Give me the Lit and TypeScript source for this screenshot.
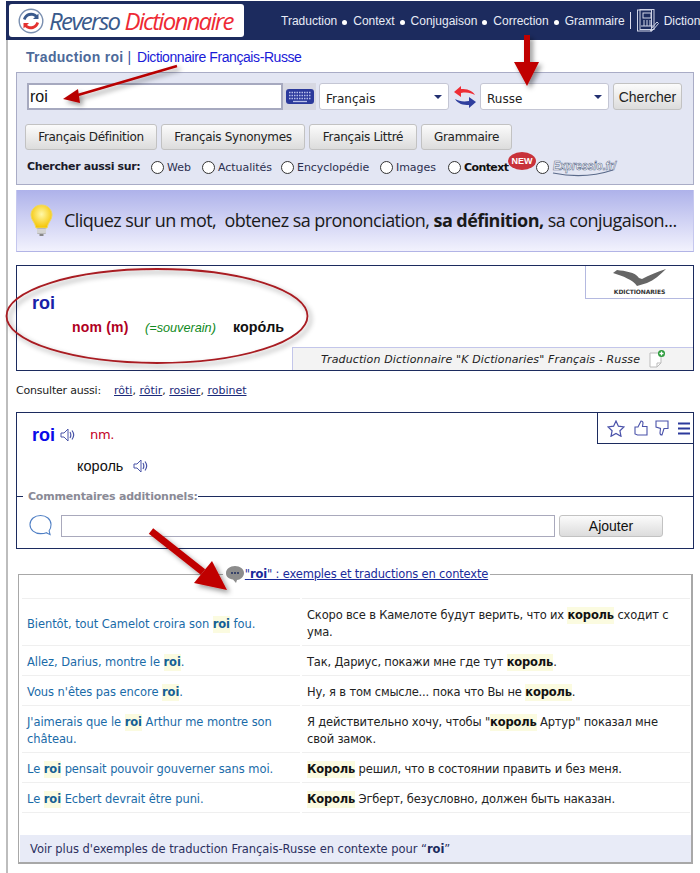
import { LitElement, html, css, svg } from "lit";
import { customElement } from "lit/decorators.js";

const speaker = html`<svg class="spk" width="15" height="14" viewBox="0 0 15 14"><path d="M1 5h3l4-4v12l-4-4H1z" fill="#fff" stroke="#4a55a8" stroke-width="1"/><path d="M10 4c1 1.800 1 4.200 0 6M12 2.500c2 2.700 2 6.300 0 9" fill="none" stroke="#4a55a8" stroke-width="1.200"/></svg>`;

const rows: [unknown, unknown][] = [
  [html`Bientôt, tout Camelot croira son <b>roi</b> fou.`, html`Скоро все в Камелоте будут верить, что их <b>король</b> сходит с ума.`],
  [html`Allez, Darius, montre le <b>roi</b>.`, html`Так, Дариус, покажи мне где тут <b>король</b>.`],
  [html`Vous n'êtes pas encore <b>roi</b>.`, html`Ну, я в том смысле... пока что Вы не <b>король</b>.`],
  [html`J'aimerais que le <b>roi</b> Arthur me montre son château.`, html`Я действительно хочу, чтобы "<b>король</b> Артур" показал мне свой замок.`],
  [html`Le <b>roi</b> pensait pouvoir gouverner sans moi.`, html`<b>Король</b> решил, что в состоянии править и без меня.`],
  [html`Le <b>roi</b> Ecbert devrait être puni.`, html`<b>Король</b> Эгберт, безусловно, должен быть наказан.`],
];

@customElement("app-root")
export class AppRoot extends LitElement {
  static styles = css`
    :host { display: block; position: relative; width: 700px; height: 873px; overflow: hidden; background: #fff; font-family: "DejaVu Sans", sans-serif; font-size: 11px; color: #222; }
    * { box-sizing: border-box; }
    a { color: inherit; }
    .top { margin: 1px 0 0 6px; height: 39px; background: #1c2b5e; display: flex; align-items: center; overflow: hidden; white-space: nowrap; }
    .logo { margin-left: 3px; width: 235px; height: 33px; background: #fff; border-radius: 3px; display: flex; align-items: center; flex: none; }
    .logo svg { margin-left: 9px; flex: none; }
    .rev, .dic { font-family: "Open Sans", sans-serif; font-style: italic; font-size: 24px; }
    .rev { color: #3a5a8c; margin-left: 5px; letter-spacing: -1.65px; }
    .dic { color: #ee2a35; margin-left: 5px; letter-spacing: -1.75px; }
    .nav { margin-left: 37px; display: flex; align-items: center; color: #e8ecf6; font-family: "Liberation Sans", sans-serif; font-size: 12px; flex: none; }
    .nav .dot { width: 5px; height: 5px; border-radius: 50%; background: #fff; margin: 4px 6px 0 5px; }
    .nav .sep { width: 1px; height: 17px; background: #dde; margin: 0 6px 0 5px; }
    .nav svg { margin-right: 5px; }
    .main { margin-left: 6px; border-left: 2px solid #bdbdbd; padding-left: 8px; height: 833px; width: 688px; }
    .title { height: 32px; padding: 8px 0 0 10px; font-family: "Liberation Sans", sans-serif; font-size: 14px; line-height: 18px; color: #3c4fa0; }
    .title b { color: #4d6a9a; letter-spacing: 0.3px; }
    .title span { color: #1a1ad8; letter-spacing: -0.42px; margin-left: 2px; }
    .search { width: 678px; height: 113px; background: #e3e6f3; border: 1px solid #a9acc6; padding: 10px 0 0 10px; }
    .r1 { display: flex; align-items: flex-start; }
    .inp { width: 256px; height: 27px; border: 2px solid #a6a9bf; background: #fff; font: 16px "Liberation Sans", sans-serif; padding: 0 1px; color: #111; outline: none; }
    .kb { width: 33px; height: 27px; background: #d7d8e2; display: flex; align-items: center; justify-content: center; }
    .sel { height: 27px; background: #fff; border: 1px solid #c4c6d4; border-radius: 3px; display: flex; align-items: center; justify-content: space-between; padding: 4px 6px 0 6px; color: #222; font-size: 12px; }
    .sel i { width: 0; height: 0; border: 4px solid transparent; border-top: 4px solid #223070; border-bottom: 0; margin-top: -4px; }
    .s1 { width: 130px; margin-left: 3px; }
    .s2 { width: 129px; }
    .swap { width: 31px; display: flex; justify-content: center; padding-top: 2px; }
    .btn { border: 1px solid #c2c2c2; border-radius: 3px; background: linear-gradient(#fbfbfb, #dcdcdc); color: #222; display: flex; align-items: center; justify-content: center; padding: 0; }
    .go { width: 69px; height: 27px; margin-left: 4px; font: 14px "Liberation Sans", sans-serif; }
    .r2 { display: flex; gap: 4px; margin-top: 14px; margin-left: -2px; }
    .r2 .btn { height: 26px; font-size: 12px; font-family: "DejaVu Sans", sans-serif; letter-spacing: -0.3px; }
    .r3 { display: flex; align-items: center; margin-top: 8px; height: 19px; font-size: 11px; position: relative; }
    .r3 .lab { font-weight: 700; font-size: 11px; letter-spacing: -0.35px; width: 124px; margin-top: -2px; color: #1a1a2a; }
    .rd { width: 13px; height: 13px; border-radius: 50%; border: 1.300px solid #333; background: #fff; flex: none; margin-right: 3px; }
    .opt { display: flex; align-items: center; color: #2c3050; letter-spacing: -0.05px; }
    .opt.ctx { color: #111; font-weight: 700; letter-spacing: -0.6px; }
    .new { width: 28px; height: 18px; flex: none; margin-top: -14px; background: #c8323a; border-radius: 50%; color: #fff; font: 700 9px/18px "Liberation Sans", sans-serif; text-align: center; }
    .banner { margin-top: 5px; width: 678px; height: 62px; background: linear-gradient(#aeb2ea, #f2f2fd); border-bottom: 1px solid #b2b4e6; border-left: 1px solid #c5c7ee; border-right: 1px solid #c5c7ee; display: flex; align-items: center; padding-left: 13px; }
    .banner p { margin: -2px 0 0 11px; font: 18px "Open Sans", sans-serif; letter-spacing: -0.55px; color: #1a1a1a; white-space: nowrap; }
    .dict { margin-top: 13px; width: 678px; height: 106px; border: 1px solid #1c2b5e; display: flex; flex-direction: column; position: relative; }
    .kd { align-self: flex-end; width: 108px; height: 33px; border-left: 1px solid #b4b9e0; border-bottom: 1px solid #b4b9e0; display: flex; flex-direction: column; align-items: center; justify-content: flex-start; padding-top: 3px; font: 700 6px/7px "DejaVu Sans", sans-serif; letter-spacing: -0.1px; color: #333; }
    .kd svg { margin-bottom: 1px; flex: none; }
    .dmain { flex: 1; padding-left: 15px; font-family: "Liberation Sans", sans-serif; margin-top: -6px; }
    .dw { font-size: 18px; font-weight: 700; line-height: 20px; color: #1a1fa8; }
    .dl { display: flex; align-items: baseline; margin: 6px 0 0 40px; line-height: 16px; }
    .dl .p { font-size: 14px; font-weight: 700; color: #b00022; width: 73px; letter-spacing: 0.2px; }
    .dl .m { font-size: 12.700px; font-style: italic; color: #118a22; width: 88px; }
    .dl .t { font-size: 14.300px; font-weight: 700; color: #111; }
    .src { align-self: flex-end; width: 401px; height: 23px; background: #f3f3f3; border-top: 1px solid #c3c6ea; border-left: 1px solid #c3c6ea; display: flex; align-items: center; padding-left: 28px; font-style: italic; font-size: 11px; letter-spacing: 0.13px; color: #222; white-space: nowrap; }
    .src svg { margin-left: 9px; flex: none; }
    .also { height: 41px; padding-top: 13px; line-height: 14px; font-size: 11px; color: #222; display: flex; white-space: nowrap; }
    .also span { width: 98px; letter-spacing: -0.2px; }
    .also a { color: #1b2a7a; }
    .card { width: 678px; height: 137px; border: 1px solid #1c2b5e; display: flex; flex-direction: column; position: relative; }
    .tools { position: absolute; right: 0; top: 0; width: 96px; height: 31px; border-left: 1px solid #1c2b5e; border-bottom: 1px solid #1c2b5e; display: flex; align-items: center; padding-left: 9px; }
    .w1 { height: 38px; padding: 6px 0 0 15px; display: flex; align-items: center; font-family: "Liberation Sans", sans-serif; }
    .w1 b { font-size: 18px; color: #0a0ae8; }
    .w1 .spk { margin-left: 5px; }
    .w1 .g { margin-left: 15px; font: 13px "DejaVu Sans", sans-serif; letter-spacing: -0.3px; color: #c4001f; margin-top: -1px; }
    .w2 { height: 30px; margin-left: 60px; display: flex; align-items: center; font: 14.500px "Liberation Sans", sans-serif; color: #111; }
    .w2 .spk { margin-left: 10px; }
    .leg { display: flex; align-items: center; margin-top: 8px; height: 14px; font-weight: 700; font-size: 11px; letter-spacing: -0.2px; color: #8a8a96; white-space: nowrap; }
    .leg::before { content: ""; width: 6px; height: 1px; background: #1c2b5e; margin-right: 5px; }
    .leg::after { content: ""; flex: 1; height: 1px; background: #1c2b5e; margin-top: 1px; }
    .cm { display: flex; margin: 11px 0 0 12px; align-items: center; }
    .cm svg { flex: none; }
    .cm input { width: 494px; height: 22px; margin-left: 9px; border: 1px solid #a9a9bc; outline: none; background: #fff; }
    .add { width: 104px; height: 22px; margin-left: 4px; font: 14px "Liberation Sans", sans-serif; color: #111; }
    .ctxbox { margin: 25px 0 0 2px; width: 675px; height: 290px; border: 1px solid #a8a8a8; border-width: 1px 2px 2px 1px; display: flex; flex-direction: column; }
    .clegend { align-self: center; margin-top: -12px; margin-left: 3px; height: 22px; background: #fff; padding: 0 2px; display: flex; align-items: center; font-size: 11.500px; letter-spacing: -0.17px; white-space: nowrap; }
    .clegend a { color: #1a2a9a; }
    .clegend svg { flex: none; }
    .tbl { margin: 13px 0 0 3px; display: grid; grid-template-columns: 278px 388px; column-gap: 2px; line-height: 17px; font-size: 11.500px; letter-spacing: -0.17px; }
    .tbl > div { padding: 8px 5px 4px; border-bottom: 1px solid #efefef; }
    .tbl .h { padding: 0; height: 1px; border-bottom: 1px solid #efefef; }
    .tbl .l { color: #1a6ba8; display: flex; align-items: center; letter-spacing: -0.07px; }
    .tbl .l > span { display: block; }
    .tbl .r { color: #222; }
    .tbl b { background: #fbfbe0; display: inline-block; line-height: 17px; }
    .tbl .l b { color: #155f95; }
    .tbl .r b { color: #111; }
    .more { margin-top: auto; height: 27px; margin-left: 1px; background: #e8ebf7; display: flex; align-items: center; padding-left: 10px; font-size: 11.500px; letter-spacing: -0.05px; color: #2c3060; white-space: nowrap; }
    .more b { color: #1c2b5e; }
    .ov { position: absolute; left: 0; top: 0; pointer-events: none; }
  `;

  render() {
    return html`
      <div class="top">
        <div class="logo">
          <svg width="26" height="26" viewBox="0 0 26 26">
            <circle cx="13" cy="13" r="11.800" fill="#fff" stroke="#7a8fb0" stroke-width="1.400"/>
            <path d="M5 11a8.500 8.500 0 0 1 14-4l1.500-1.500V11h-5.500l2-2a6 6 0 0 0-9.500 3z" fill="#3a5a8c"/>
            <path d="M21 15a8.500 8.500 0 0 1-14 4l-1.500 1.500V15H11l-2 2a6 6 0 0 0 9.500-3z" fill="#e4312f"/>
          </svg>
          <span class="rev">Reverso</span><span class="dic">Dictionnaire</span>
        </div>
        <div class="nav">
          Traduction<span class="dot"></span>Context<span class="dot"></span>Conjugaison<span class="dot"></span>Correction<span class="dot"></span>Grammaire<span class="sep"></span>
          <svg width="22" height="23" viewBox="0 0 22 23" fill="none" stroke="#cfd4e6" stroke-width="1"><rect x="0.500" y="1" width="14" height="21"/><rect x="3" y="0.500" width="14" height="20"/><rect x="6" y="4" width="8" height="5"/><path d="M7 11v6M10 11v6M13 11v6M4 17h12"/><path d="M14 20l6-7 1.500 1.500-6 7-2 .5z"/></svg>
          Dictionnaire
        </div>
      </div>
      <div class="main">
        <div class="title"><b>Traduction roi</b> | <span>Dictionnaire Français-Russe</span></div>
        <div class="search">
          <div class="r1">
            <input class="inp" .value=${"roi"} />
            <div class="kb"><svg width="28" height="15" viewBox="0 0 28 15"><rect width="28" height="15" rx="3" fill="#2c3a9c"/><g stroke="#b9c0ea" stroke-width="1.500" stroke-dasharray="1.500 1"><path d="M3 3.500h22M3 6.500h22"/><path d="M3 9.500h22"/></g><path d="M7 12.500h14" stroke="#b9c0ea" stroke-width="1.300"/></svg></div>
            <div class="sel s1">Français<i></i></div>
            <div class="swap"><svg width="24" height="24" viewBox="0 0 24 24"><path d="M1 7l7-6v3c6 0 11 1 14 6-4-2-8-3-14-2v4z" fill="#ee2e35"/><path d="M23 17l-7 6v-3c-6 0-11-1-14-6 4 2 8 3 14 2v-4z" fill="#2f3f9e"/></svg></div>
            <div class="sel s2">Russe<i></i></div>
            <button class="btn go">Chercher</button>
          </div>
          <div class="r2">
            <button class="btn" style="width:132px">Français Définition</button>
            <button class="btn" style="width:144px">Français Synonymes</button>
            <button class="btn" style="width:108px">Français Littré</button>
            <button class="btn" style="width:91px">Grammaire</button>
          </div>
          <div class="r3">
            <span class="lab">Chercher aussi sur:</span>
            <span class="opt" style="width:51px"><span class="rd"></span>Web</span>
            <span class="opt" style="width:79px"><span class="rd"></span>Actualités</span>
            <span class="opt" style="width:99px"><span class="rd"></span>Encyclopédie</span>
            <span class="opt" style="width:68px"><span class="rd"></span>Images</span>
            <span class="opt ctx" style="width:60px"><span class="rd"></span>Context</span>
            <span class="new">NEW</span>
            <span class="rd"></span>
            <svg width="66" height="19" viewBox="0 0 66 19"><text x="1" y="12" font-family="Liberation Sans" font-size="12" font-weight="700" font-style="italic" fill="#fff" stroke="#5a6a8a" stroke-width="0.600" textLength="63" lengthAdjust="spacingAndGlyphs">Expressio.fr/</text><path d="M1 15c20 4 42 3 60-3" fill="none" stroke="#5a6a8a" stroke-width="1.200"/></svg>
          </div>
        </div>
        <div class="banner">
          <svg width="23" height="33" viewBox="0 0 23 33"><defs><radialGradient id="bl" cx="0.500" cy="0.400" r="0.600"><stop offset="0" stop-color="#fff8a8"/><stop offset="1" stop-color="#f5c400"/></radialGradient></defs><path d="M11.500 1C5 1 1 6 1 11c0 5 4 7 5 13h11c1-6 5-8 5-13 0-5-4-10-10.500-10z" fill="url(#bl)" stroke="#f0d860"/><rect x="7" y="24" width="9" height="6" rx="1" fill="#b8b8b8"/><path d="M7 26h9M7 28h9" stroke="#eee"/><rect x="9.500" y="30" width="4" height="2" fill="#888"/></svg>
          <p>Cliquez sur un mot,&nbsp; obtenez sa prononciation, <b>sa définition,</b> sa conjugaison...</p>
        </div>
        <div class="dict">
          <div class="kd">
            <svg width="54" height="18" viewBox="0 0 54 18"><path d="M0 4L4 1C12 2 22 3 26 9L29 10C36 6 44 3 53 0C47 6 41 11 34 14L24 17C20 11 10 7 0 4z" fill="#666"/></svg>
            KDICTIONARIES
          </div>
          <div class="dmain">
            <div class="dw">roi</div>
            <div class="dl"><span class="p">nom (m)</span><span class="m">(=souverain)</span><span class="t">коро́ль</span></div>
          </div>
          <div class="src">Traduction Dictionnaire "K Dictionaries" Français - Russe
            <svg width="18" height="18" viewBox="0 0 18 18"><path d="M1 3h11v10l-4 4H1z" fill="#fff" stroke="#bbb"/><path d="M8 17v-4h4" fill="none" stroke="#bbb"/><circle cx="12.500" cy="3.500" r="3.500" fill="#2a9a3a"/><path d="M12.500 1.500v4M10.500 3.500h4" stroke="#fff" stroke-width="1.300"/></svg>
          </div>
        </div>
        <div class="also"><span>Consulter aussi:</span><div><a href="#">rôti</a>, <a href="#">rôtir</a>, <a href="#">rosier</a>, <a href="#">robinet</a></div></div>
        <div class="card">
          <div class="tools">
            <svg width="18" height="17" viewBox="0 0 18 17" style="margin-right:9px"><path d="M9 1l2.400 5.200 5.600.7-4.100 3.800 1.100 5.600L9 13.500l-5 2.800 1.100-5.600L1 6.900l5.600-.7z" fill="none" stroke="#4a52aa" stroke-width="1.200"/></svg>
            <svg width="14" height="16" viewBox="0 0 14 16" style="margin-right:7px"><path d="M1 7h3l3-6c1.500 0 2 1 2 2l-.5 3.500H13V15H3.500L1 14z" fill="none" stroke="#4a52aa" stroke-width="1.100"/></svg>
            <svg width="14" height="16" viewBox="0 0 14 16" style="margin-right:9px"><path d="M1 1h12v7.500H9L7 15c-1.500 0-2-.5-2-2l.5-4.500L1 7z" fill="none" stroke="#4a52aa" stroke-width="1.100"/></svg>
            <svg width="12" height="13" viewBox="0 0 12 13"><path d="M0 1.500h12M0 6.500h12M0 11.500h12" stroke="#2c3a9c" stroke-width="2"/></svg>
          </div>
          <div class="w1"><b>roi</b>${speaker}<span class="g">nm.</span></div>
          <div class="w2">король${speaker}</div>
          <div class="leg">Commentaires additionnels:</div>
          <div class="cm">
            <svg width="23" height="23" viewBox="0 0 24 23"><path d="M12 1C6 1 1 5 1 10.500S6 20 12 20c2 0 4 0 6-1l4 2-1-4c1.500-2 2-4 2-6.500C23 5 18 1 12 1z" fill="#fff" stroke="#4f7fc4" stroke-width="1.100"/></svg>
            <input />
            <button class="btn add">Ajouter</button>
          </div>
        </div>
        <div class="ctxbox">
          <div class="clegend">
            <svg width="20" height="19" viewBox="0 0 20 19"><path d="M10 1c5 0 9 3 9 7s-4 7-7 7l-1 3-3-3.500C4 14 1 12 1 8c0-4 4-7 9-7z" fill="#8c8c8c"/><path d="M6 8h2M9 8h2M12 8h2" stroke="#1c2b5e" stroke-width="1.600"/></svg>
            <a href="#">"<b>roi</b>" : exemples et traductions en contexte</a>
          </div>
          <div class="tbl">
            <div class="h"></div><div class="h"></div>
            ${rows.map(([a, b]) => html`<div class="l"><span>${a}</span></div><div class="r">${b}</div>`)}
          </div>
          <div class="more"><span>Voir plus d'exemples de traduction Français-Russe en contexte pour “<b>roi</b>”</span></div>
        </div>
      </div>
      <svg class="ov" width="700" height="873" viewBox="0 0 700 873">
        ${svg`<defs><filter id="sh" x="-20%" y="-20%" width="140%" height="140%"><feDropShadow dx="3" dy="3" stdDeviation="2.500" flood-color="#000" flood-opacity="0.400"/></filter></defs>
        <g filter="url(#sh)">
          <ellipse cx="157" cy="316" rx="150.500" ry="47" fill="none" stroke="#a81c22" stroke-width="1.800"/>
          <path d="M177 66L78 95" stroke="#b80000" stroke-width="2.500"/>
          <path d="M63 99L78 89l2 14z" fill="#b80000"/>
          <path d="M524 35h6v27h9l-12 24-13-24h10z" fill="#c00000"/>
          <path d="M151 531L203 572" stroke="#c00000" stroke-width="7"/>
          <path d="M227 590L212 561L194 583z" fill="#c00000"/>
        </g>`}
      </svg>
    `;
  }
}
